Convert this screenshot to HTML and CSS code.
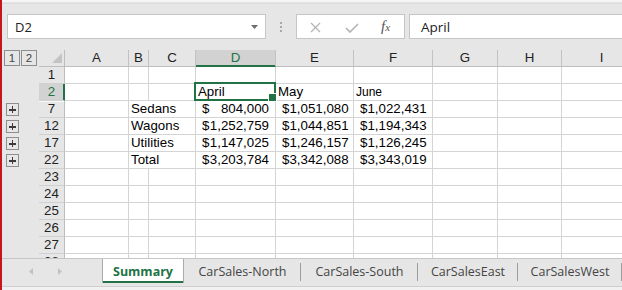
FILE: index.html
```html
<!DOCTYPE html>
<html>
<head>
<meta charset="utf-8">
<title>Summary</title>
<link rel="stylesheet" href="styles.css">
</head>
<body>
<div class="app">
  <div class="topstrip"></div>
  <div class="fbar">
    <div class="namebox"><span>D2</span>
      <svg class="caret" width="7" height="4" viewBox="0 0 7 4"><path d="M0 0H7L3.5 4Z" fill="#6d6d6d"/></svg>
    </div>
    <div class="dots">
      <svg width="2" height="10" viewBox="0 0 2 10"><rect x="0" y="0" width="2" height="2" fill="#a8a8a8"/><rect x="0" y="4" width="2" height="2" fill="#a8a8a8"/><rect x="0" y="8" width="2" height="2" fill="#a8a8a8"/></svg>
    </div>
    <div class="fbtns">
      <svg class="ic-x" width="11" height="11" viewBox="0 0 11 11"><path d="M1 1L10 10M10 1L1 10" stroke="#b5b5b5" stroke-width="1.3" fill="none"/></svg>
      <svg class="ic-ok" width="14" height="10" viewBox="0 0 14 10"><path d="M1 5L5 9L13 1" stroke="#b5b5b5" stroke-width="1.7" fill="none"/></svg>
      <span class="fx"><i>f</i><i class="fxx">x</i></span>
    </div>
    <div class="finput">April</div>
  </div>

  <div class="sheet">
    <!-- header row -->
    <div class="o head"><span class="lv">1</span><span class="lv">2</span></div>
    <div class="corner"><span class="tri"></span></div>
    <div class="ch">A</div>
    <div class="ch">B</div>
    <div class="ch">C</div>
    <div class="ch hsel">D</div>
    <div class="ch">E</div>
    <div class="ch">F</div>
    <div class="ch">G</div>
    <div class="ch">H</div>
    <div class="ch">I</div>

    <!-- row 1 -->
    <div class="o"></div><div class="rh">1</div>
    <div class="c"></div><div class="c"></div><div class="c"></div><div class="c"></div><div class="c"></div><div class="c"></div><div class="c"></div><div class="c"></div><div class="c"></div>

    <!-- row 2 -->
    <div class="o"></div><div class="rh rsel">2</div>
    <div class="c"></div><div class="c"></div><div class="c"></div>
    <div class="c sel">April</div>
    <div class="c">May</div>
    <div class="c small">June</div>
    <div class="c"></div><div class="c"></div><div class="c"></div>

    <!-- row 7 -->
    <div class="o"><span class="plus"></span></div><div class="rh gap">7</div>
    <div class="c"></div>
    <div class="c span2">Sedans</div>
    <div class="c acct"><span>$</span><span>804,000</span></div>
    <div class="c acct"><span>$</span><span>1,051,080</span></div>
    <div class="c acct"><span>$</span><span>1,022,431</span></div>
    <div class="c"></div><div class="c"></div><div class="c"></div>

    <!-- row 12 -->
    <div class="o"><span class="plus"></span></div><div class="rh">12</div>
    <div class="c"></div>
    <div class="c span2">Wagons</div>
    <div class="c acct"><span>$</span><span>1,252,759</span></div>
    <div class="c acct"><span>$</span><span>1,044,851</span></div>
    <div class="c acct"><span>$</span><span>1,194,343</span></div>
    <div class="c"></div><div class="c"></div><div class="c"></div>

    <!-- row 17 -->
    <div class="o"><span class="plus"></span></div><div class="rh">17</div>
    <div class="c"></div>
    <div class="c span2">Utilities</div>
    <div class="c acct"><span>$</span><span>1,147,025</span></div>
    <div class="c acct"><span>$</span><span>1,246,157</span></div>
    <div class="c acct"><span>$</span><span>1,126,245</span></div>
    <div class="c"></div><div class="c"></div><div class="c"></div>

    <!-- row 22 -->
    <div class="o"><span class="plus"></span></div><div class="rh">22</div>
    <div class="c"></div>
    <div class="c span2">Total</div>
    <div class="c acct"><span>$</span><span>3,203,784</span></div>
    <div class="c acct"><span>$</span><span>3,342,088</span></div>
    <div class="c acct"><span>$</span><span>3,343,019</span></div>
    <div class="c"></div><div class="c"></div><div class="c"></div>

    <!-- rows 23-28 -->
    <div class="o"></div><div class="rh">23</div>
    <div class="c"></div><div class="c"></div><div class="c"></div><div class="c"></div><div class="c"></div><div class="c"></div><div class="c"></div><div class="c"></div><div class="c"></div>
    <div class="o"></div><div class="rh">24</div>
    <div class="c"></div><div class="c"></div><div class="c"></div><div class="c"></div><div class="c"></div><div class="c"></div><div class="c"></div><div class="c"></div><div class="c"></div>
    <div class="o"></div><div class="rh">25</div>
    <div class="c"></div><div class="c"></div><div class="c"></div><div class="c"></div><div class="c"></div><div class="c"></div><div class="c"></div><div class="c"></div><div class="c"></div>
    <div class="o"></div><div class="rh">26</div>
    <div class="c"></div><div class="c"></div><div class="c"></div><div class="c"></div><div class="c"></div><div class="c"></div><div class="c"></div><div class="c"></div><div class="c"></div>
    <div class="o"></div><div class="rh">27</div>
    <div class="c"></div><div class="c"></div><div class="c"></div><div class="c"></div><div class="c"></div><div class="c"></div><div class="c"></div><div class="c"></div><div class="c"></div>
    <div class="o"></div><div class="rh">28</div>
    <div class="c"></div><div class="c"></div><div class="c"></div><div class="c"></div><div class="c"></div><div class="c"></div><div class="c"></div><div class="c"></div><div class="c"></div>
  </div>

  <div class="tabbar">
    <div class="nav">
      <svg width="4" height="7" viewBox="0 0 4 7"><path d="M4 0V7L0 3.5Z" fill="#c2c2c2"/></svg>
      <svg width="4" height="7" viewBox="0 0 4 7"><path d="M0 0V7L4 3.5Z" fill="#c2c2c2"/></svg>
    </div>
    <div class="tab active w-sum">Summary</div>
    <div class="tab w-n">CarSales-North</div>
    <div class="tab w-s">CarSales-South</div>
    <div class="tab w-e">CarSalesEast</div>
    <div class="tab w-w">CarSalesWest</div>
  </div>
  <div class="bottomstrip"></div>
</div>
</body>
</html>
```

FILE: styles.css
```css
* { box-sizing: border-box; }
html, body { margin: 0; padding: 0; }
body {
  width: 622px;
  height: 290px;
  overflow: hidden;
  background: #e6e6e6;
  font-family: "Liberation Sans", Arial, sans-serif;
}
.app {
  height: 290px;
  border-left: 2px solid #c4161c;
  display: flex;
  flex-direction: column;
  background: #e6e6e6;
  overflow: hidden;
}
.topstrip {
  flex: none;
  height: 4px;
  background: linear-gradient(#f5f5f5 0, #f5f5f5 2px, #d4d4d4 3px, #e3e3e3 4px);
}

/* formula bar */
.fbar {
  flex: none;
  height: 46px;
  display: flex;
  align-items: flex-start;
  padding-top: 10px;
}
.namebox {
  margin-left: 5px;
  width: 259px;
  height: 25px;
  background: #fff;
  border: 1px solid #c6c6c6;
  display: flex;
  align-items: center;
  justify-content: space-between;
  padding: 0 7px;
  font-family: "Open Sans", "Noto Sans", sans-serif;
  font-size: 13px;
  color: #222;
}
.dots {
  width: 30px;
  height: 25px;
  display: flex;
  align-items: center;
  justify-content: center;
}
.fbtns {
  width: 109px;
  height: 25px;
  background: #fff;
  border: 1px solid #c6c6c6;
  display: flex;
  align-items: center;
  padding-left: 13px;
}
.ic-x { margin-top: 1px; }
.ic-ok { margin-left: 24px; margin-top: 2px; }
.fx {
  margin-left: 22px;
  font-family: "Liberation Serif", "DejaVu Serif", serif;
  font-size: 15px;
  color: #555;
  line-height: 1;
}
.fxx { font-size: 11px; }
.finput {
  margin-left: 4px;
  flex: 1;
  height: 25px;
  background: #fff;
  border: 1px solid #c6c6c6;
  border-right: none;
  padding-left: 11px;
  display: flex;
  align-items: center;
  font-family: "Open Sans", "Noto Sans", sans-serif;
  font-size: 13.5px;
  color: #222;
}

/* sheet grid */
.sheet {
  flex: none;
  height: 208px;
  overflow: hidden;
  display: grid;
  grid-template-columns: 37px 26px 64px 20px 47px 80px 78px 79px 65px 64px 80px;
  grid-auto-rows: 17px;
  background: #fff;
  font-size: 13.3px;
  line-height: 16px;
}
.o {
  background: #e6e6e6;
}
.o.head {
  display: flex;
  gap: 1px;
  padding-left: 2px;
}
.lv {
  width: 16px;
  height: 16px;
  border: 1px solid #8e8e8e;
  font-size: 11.5px;
  line-height: 14px;
  text-align: center;
  color: #444;
}
.plus {
  display: block;
  position: relative;
  margin: 2px 0 0 4px;
  width: 13px;
  height: 13px;
  border: 1px solid #8e8e8e;
}
.plus::before,
.plus::after {
  content: "";
  position: absolute;
  background: #3a3a3a;
}
.plus::before { left: 2px; top: 5px; width: 7px; height: 1.6px; }
.plus::after { left: 4.7px; top: 2px; width: 1.6px; height: 7px; }

.corner {
  position: relative;
  background: #e6e6e6;
  border-right: 1px solid #bdbdbd;
  border-bottom: 1px solid #bdbdbd;
}
.tri {
  position: absolute;
  right: 2px;
  bottom: 3px;
  width: 0;
  height: 0;
  border-left: 10px solid transparent;
  border-bottom: 10px solid #c4c4c4;
}
.ch {
  background: #e6e6e6;
  border-right: 1px solid #c2c2c2;
  border-bottom: 1px solid #bdbdbd;
  text-align: center;
  color: #222;
}
.ch.hsel {
  background: #d2d2d2;
  color: #217346;
  border-bottom-color: #217346;
  box-shadow: inset 0 -1px 0 #217346;
}
.rh {
  background: #e6e6e6;
  border-right: 1px solid #bdbdbd;
  border-bottom: 1px solid #d0d0d0;
  text-align: center;
  color: #222;
}
.rh.rsel {
  background: #d2d2d2;
  color: #217346;
  border-right-color: #217346;
  box-shadow: inset -1px 0 0 #217346;
}
.rh.gap {
  box-shadow: inset 0 1px 0 #fafafa;
}
.c {
  border-right: 1px solid #d4d4d4;
  border-bottom: 1px solid #d4d4d4;
  padding: 0 2px;
  white-space: nowrap;
  color: #000;
}
.c.small { font-size: 12px; }
.c.span2 { grid-column: span 2; }
.c.acct {
  display: flex;
  justify-content: space-between;
  padding: 0 6px;
}
.c.sel {
  position: relative;
  z-index: 2;
}
.c.sel::before {
  content: "";
  position: absolute;
  left: -2px;
  top: -2px;
  right: -1px;
  bottom: -1px;
  border: 2px solid #217346;
}
.c.sel::after {
  content: "";
  position: absolute;
  right: -2px;
  bottom: -2px;
  width: 7px;
  height: 7px;
  background: #217346;
  border: 1px solid #fff;
}

/* tabs */
.tabbar {
  flex: none;
  height: 29px;
  display: flex;
  align-items: flex-start;
  border-top: 1px solid #c6c6c6;
  border-bottom: 1px solid #cfcfcf;
  background: #e6e6e6;
  font-family: "Open Sans", "Noto Sans", sans-serif;
  font-size: 12.5px;
}
.nav {
  width: 100px;
  height: 24px;
  display: flex;
  align-items: center;
  padding-left: 27px;
  gap: 25px;
}
.tab {
  position: relative;
  height: 24px;
  display: flex;
  align-items: center;
  justify-content: center;
  color: #444;
  white-space: nowrap;
}
.tab::after {
  content: "";
  position: absolute;
  right: 0;
  top: 4px;
  width: 1px;
  height: 18px;
  background: #9c9c9c;
}
.tab.active {
  background: #fff;
  color: #217346;
  font-weight: bold;
  border-left: 1px solid #ababab;
  border-right: 1px solid #ababab;
  box-shadow: inset 0 -2px 0 #217346;
}
.tab.active::after { display: none; }
.w-sum { width: 82px; }
.w-n { width: 117px; }
.w-s { width: 117px; }
.w-e { width: 100px; }
.w-w { width: 104px; }
.bottomstrip {
  flex: 1;
  background: #f1f1f1;
}
```
